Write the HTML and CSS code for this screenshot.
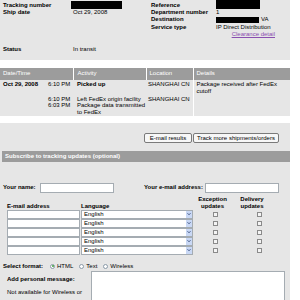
FILE: index.html
```html
<!DOCTYPE html>
<html>
<head>
<meta charset="utf-8">
<title>Track shipments</title>
<link rel="stylesheet" href="styles.css">
</head>
<body>
<div class="page">
  <section class="summary">
    <div class="col col-left">
      <div class="kv"><span class="lbl">Tracking number</span><span class="val"><span class="redact redact-trk"></span></span></div>
      <div class="kv"><span class="lbl">Ship date</span><span class="val">Oct 29, 2008</span></div>
      <div class="kv kv-status"><span class="lbl">Status</span><span class="val">In transit</span></div>
    </div>
    <div class="col col-right">
      <div class="kv"><span class="lbl">Reference</span><span class="val"><span class="redact redact-ref"></span></span></div>
      <div class="kv"><span class="lbl">Department number</span><span class="val">1</span></div>
      <div class="kv"><span class="lbl">Destination</span><span class="val"><span class="redact redact-dest"></span>VA</span></div>
      <div class="kv"><span class="lbl">Service type</span><span class="val">IP Direct Distribution</span></div>
      <div class="kv"><span class="lbl"></span><span class="val val-link"><a href="#">Clearance detail</a></span></div>
    </div>
  </section>

  <table class="activity">
    <colgroup>
      <col class="c-date"><col class="c-time"><col class="c-act"><col class="c-loc"><col class="c-det">
    </colgroup>
    <thead>
      <tr><th colspan="2">Date/Time</th><th>Activity</th><th>Location</th><th>Details</th></tr>
    </thead>
    <tbody>
      <tr class="r1"><td class="date">Oct 29, 2008</td><td class="time">6:10 PM</td><td class="act strong">Picked up</td><td class="loc">SHANGHAI CN</td><td class="det">Package received after FedEx cutoff</td></tr>
      <tr class="r2"><td></td><td class="time">6:10 PM</td><td class="act">Left FedEx origin facility</td><td class="loc">SHANGHAI CN</td><td class="det"></td></tr>
      <tr class="r3"><td></td><td class="time">6:03 PM</td><td class="act">Package data transmitted<br>to FedEx</td><td class="loc"></td><td class="det"></td></tr>
    </tbody>
  </table>

  <section class="subscribe">
    <div class="actions">
      <button class="btn btn-mail">E-mail results</button>
      <button class="btn btn-track">Track more shipments/orders</button>
    </div>
    <div class="bar">Subscribe to tracking updates (optional)</div>

    <div class="names">
      <span class="lbl">Your name:</span>
      <input class="field" type="text">
      <span></span>
      <span class="lbl">Your e-mail address:</span>
      <input class="field" type="text">
    </div>

    <div class="recips">
      <div class="hd lbl">E-mail address</div>
      <div class="hd lbl">Language</div>
      <div class="hd lbl ctr">Exception<br>updates</div>
      <div class="hd lbl ctr">Delivery<br>updates</div>

      <input class="field email" type="text"><div class="sel">English<span class="arr"><svg viewBox="0 0 6 6" width="6" height="6"><path d="M1.5 2.2 L3 3.8 L4.5 2.2" fill="none" stroke="#4a5f8c" stroke-width="1"/></svg></span></div><span class="cb cb-exc"></span><span class="cb cb-del"></span>
      <input class="field email" type="text"><div class="sel">English<span class="arr"><svg viewBox="0 0 6 6" width="6" height="6"><path d="M1.5 2.2 L3 3.8 L4.5 2.2" fill="none" stroke="#4a5f8c" stroke-width="1"/></svg></span></div><span class="cb cb-exc"></span><span class="cb cb-del"></span>
      <input class="field email" type="text"><div class="sel">English<span class="arr"><svg viewBox="0 0 6 6" width="6" height="6"><path d="M1.5 2.2 L3 3.8 L4.5 2.2" fill="none" stroke="#4a5f8c" stroke-width="1"/></svg></span></div><span class="cb cb-exc"></span><span class="cb cb-del"></span>
      <input class="field email" type="text"><div class="sel">English<span class="arr"><svg viewBox="0 0 6 6" width="6" height="6"><path d="M1.5 2.2 L3 3.8 L4.5 2.2" fill="none" stroke="#4a5f8c" stroke-width="1"/></svg></span></div><span class="cb cb-exc"></span><span class="cb cb-del"></span>
      <input class="field email" type="text"><div class="sel">English<span class="arr"><svg viewBox="0 0 6 6" width="6" height="6"><path d="M1.5 2.2 L3 3.8 L4.5 2.2" fill="none" stroke="#4a5f8c" stroke-width="1"/></svg></span></div><span class="cb cb-exc"></span><span class="cb cb-del"></span>
    </div>

    <div class="format">
      <span class="lbl">Select format:</span>
      <span class="radio on"></span><span class="opt">HTML</span>
      <span class="radio"></span><span class="opt">Text</span>
      <span class="radio"></span><span class="opt">Wireless</span>
    </div>

    <div class="message">
      <div class="msg-side">
        <div class="lbl">Add personal message:</div>
        <div class="note">Not available for Wireless or</div>
      </div>
      <textarea class="msg"></textarea>
    </div>
  </section>
</div>
</body>
</html>
```

FILE: styles.css
```css
* { box-sizing: border-box; }
body {
  margin: 0;
  background: #fff;
  font-family: "Liberation Sans", Arial, sans-serif;
  font-size: 6px;
  line-height: 7.2px;
  color: #000;
}
.page { width: 290px; }
.lbl { font-weight: bold; white-space: nowrap; }

/* summary */
.summary {
  background: #e6e6e6;
  height: 60px;
  padding-top: 2px;
  display: grid;
  grid-template-columns: 148px 142px;
}
.col { padding-left: 3px; }
.kv { display: grid; height: 7.2px; white-space: nowrap; }
.col-left .kv { grid-template-columns: 70px 75px; }
.col-right .kv { grid-template-columns: 65px 59px; }
.kv-status { margin-top: 29.4px; }
.val-link { text-align: right; }
.val-link a { color: #8a4fb0; text-decoration: underline; }
.redact { display: inline-block; vertical-align: top; background: #000; }
.redact-trk { width: 51px; height: 8px; margin: -1px 0 0 -2px; }
.redact-ref { width: 44px; height: 9px; margin-top: -2px; }
.redact-dest { width: 43px; height: 6px; margin: 0.6px 2px 0 0; }

/* activity table */
.activity {
  margin-top: 8px;
  width: 290px;
  border-collapse: collapse;
  border-spacing: 0;
  table-layout: fixed;
  background: #e6e6e6;
}
.c-date { width: 48px; }
.c-time { width: 25px; }
.c-act { width: 73px; }
.c-loc { width: 47px; }
.c-det { width: 97px; }
.activity th {
  background: #9c9c9c;
  color: #fff;
  font-weight: normal;
  text-align: left;
  height: 12px;
  padding: 0 3px;
  border-left: 1px solid #fff;
  white-space: nowrap;
}
.activity th:first-child { border-left: 0; padding-left: 3px; }
.activity th:nth-child(2) { padding-left: 4px; }
.activity td {
  padding: 0 3px;
  vertical-align: top;
  line-height: 6.8px;
}
.activity td.date { font-weight: bold; white-space: nowrap; }
.activity td.time { text-align: right; white-space: nowrap; padding-right: 5px; padding-left: 0; }
.activity td.act { padding-left: 4px; padding-right: 0; white-space: nowrap; }
.activity td.strong { font-weight: bold; }
.activity td.loc { white-space: nowrap; padding-left: 2px; }
.activity td.det { border-left: 1px solid #fff; }
.r1 td { padding-top: 1px; padding-bottom: 1px; }

/* subscribe */
.subscribe {
  margin-top: 7px;
  background: #e6e6e6;
  padding: 10px 0 40px;
}
.actions {
  display: flex;
  justify-content: flex-end;
  gap: 1px;
  padding-right: 11px;
}
.btn {
  height: 10px;
  padding: 0;
  border: 1px solid #7a7a7a;
  border-radius: 2px;
  background: #f7f7f7;
  font: inherit;
  line-height: 8px;
  color: #000;
  text-align: center;
}
.btn-mail { width: 48px; }
.btn-track { width: 86px; }
.bar {
  margin: 8px 0 0 2px;
  height: 11px;
  background: #9c9c9c;
  color: #fff;
  font-weight: bold;
  padding-left: 3px;
  line-height: 11px;
}
.names {
  margin-top: 21px;
  padding-left: 3px;
  display: grid;
  grid-template-columns: 37px 74px 30px 61px 74px;
  align-items: center;
  height: 10px;
}
.field {
  display: block;
  height: 10px;
  margin: 0;
  border: 1px solid #a5acb2;
  background: #fff;
  padding: 0;
}
.recips {
  margin-top: 3px;
  padding-left: 7px;
  display: grid;
  grid-template-columns: 74px 112px 39px 40px;
  grid-auto-rows: 9px;
  grid-template-rows: 14px;
  line-height: 7px;
}
.hd { align-self: end; }
.ctr { text-align: center; }
.field.email { width: 73px; height: 9px; }
.sel {
  position: relative;
  height: 9px;
  border: 1px solid #a5acb2;
  background: #fff;
  padding-left: 2px;
  line-height: 7px;
}
.arr {
  position: absolute;
  right: 0;
  top: 0;
  width: 6px;
  height: 7px;
  background: #c9d8f5;
  display: flex;
  align-items: center;
  justify-content: center;
}
.arr svg { display: block; }
.cb {
  align-self: center;
  width: 5px;
  height: 5px;
  border: 1px solid #8a8a8a;
  background: #f4f4f4;
}
.cb-exc { margin-left: 20px; }
.cb-del { margin-left: 25px; }

.format {
  margin-top: 8px;
  padding-left: 3px;
  display: flex;
  align-items: center;
  height: 7px;
}
.format .lbl { width: 47px; }
.radio {
  width: 5px;
  height: 5px;
  border: 1px solid #8a9aa8;
  border-radius: 50%;
  background: #fff;
  margin-right: 2px;
  position: relative;
}
.radio.on::after {
  content: "";
  position: absolute;
  left: 0.5px;
  top: 0.5px;
  width: 2px;
  height: 2px;
  border-radius: 50%;
  background: #3c9c3c;
}
.opt { margin-right: 6px; }

.message {
  margin-top: 1px;
  padding-left: 7px;
  display: grid;
  grid-template-columns: 84px 194px;
}
.msg-side { padding-top: 5px; line-height: 7px; }
.note { margin-top: 6px; }
.msg {
  display: block;
  width: 194px;
  height: 40px;
  margin: 0;
  border: 1px solid #a5acb2;
  background: #fff;
  resize: none;
}
```
